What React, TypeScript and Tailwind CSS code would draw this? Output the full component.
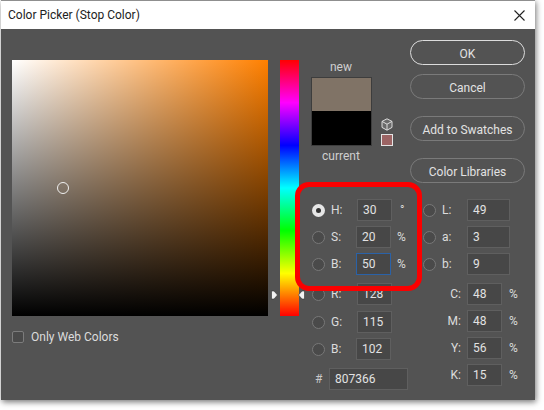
import React from "react";

const font = { fontFamily: 'Roboto, "Open Sans", sans-serif' };

function Btn({ label, primary, cls }: { label: string; primary?: boolean; cls: string }) {
  return (
    <div
      className={`w-[115px] h-[25px] pt-[2px] rounded-full border-[1.5px] flex items-center justify-center text-[12px] text-[#e2e2e2] ${
        primary ? "border-[#dcdcdc]" : "border-[#7a7a7a]"
      } ${cls}`}
    >
      {label}
    </div>
  );
}

function Radio({ on }: { on?: boolean }) {
  return on ? (
    <div className="w-[13px] h-[13px] rounded-full bg-[#e6e6e6] flex items-center justify-center shrink-0">
      <div className="w-[5px] h-[5px] rounded-full bg-[#333333]" />
    </div>
  ) : (
    <div className="w-[13px] h-[13px] rounded-full bg-[#4a4a4a] border border-[#787878] shrink-0" />
  );
}

function Field({ value, w, focus, ml }: { value: string; w: string; focus?: boolean; ml?: string }) {
  return (
    <div
      className={`h-[22px] ${w} ${ml ?? ""} border flex items-center pl-[5px] text-[12px] text-[#e2e2e2] bg-[#474747] shrink-0 ${
        focus ? "border-[#2a62a8]" : "border-[#5f5f5f]"
      }`}
    >
      {value}
    </div>
  );
}

function LeftRow({ label, value, unit, on, focus, cls, inputCls, unitCls }: { label: string; value: string; unit?: string; on?: boolean; focus?: boolean; cls: string; inputCls: string; unitCls?: string }) {
  return (
    <div className={`flex items-center h-[22px] text-[12px] text-[#dcdcdc] ${cls}`}>
      <Radio on={on} />
      <span className="ml-[6px] w-[26px]">{label}</span>
      <Field value={value} w="w-[35px]" focus={focus} ml={inputCls} />
      {unit && <span className={unitCls}>{unit}</span>}
    </div>
  );
}

function LabRow({ label, value, cls }: { label: string; value: string; cls: string }) {
  return (
    <div className={`flex items-center h-[22px] text-[12px] text-[#dcdcdc] ${cls}`}>
      <Radio />
      <span className="ml-[6px] w-[25px]">{label}</span>
      <Field value={value} w="w-[43px]" />
    </div>
  );
}

function CmykRow({ label, value, cls }: { label: string; value: string; cls: string }) {
  return (
    <div className={`flex items-center h-[22px] text-[12px] text-[#dcdcdc] ${cls}`}>
      <span className="w-[38px] text-right">{label}</span>
      <Field value={value} w="w-[35px]" ml="ml-[6px]" />
      <span className="ml-[7px]">%</span>
    </div>
  );
}

export default function App() {
  return (
    <div className="w-[544px] h-[410px] bg-white pl-px overflow-hidden" style={font}>
      <div className="w-[534px] h-[400px] border-t border-[#8f8f8f] flex flex-col shadow-[1px_2px_6px_rgba(0,0,0,0.55)]">
        <div className="h-[28px] bg-white flex items-center justify-between pl-[7px] pr-[10px] shrink-0">
          <span className="text-[12px] text-[#222222]">Color Picker (Stop Color)</span>
          <svg width="11" height="11" viewBox="0 0 11 11" stroke="#222222" strokeWidth="1.1" fill="none">
            <path d="M0.5 0.5 L10.5 10.5 M10.5 0.5 L0.5 10.5" />
          </svg>
        </div>
        <div className="relative flex-1 bg-[#535353] flex">
          <div className="w-[267px] pl-[11px] pt-[31px] shrink-0">
            <div className="w-[256px] h-[256px] bg-[linear-gradient(to_bottom,transparent,#000),linear-gradient(to_right,#fff,#ff8000)] relative">
              <div className="absolute left-[45px] top-[122px] w-[12px] h-[12px] rounded-full border border-[#f0f0f0]" />
            </div>
            <div className="flex items-center mt-[12px] text-[12px] text-[#dcdcdc]">
              <div className="w-[12px] h-[12px] rounded-[2px] bg-[#4a4a4a] border border-[#7c7c7c]" />
              <span className="ml-[7px]">Only Web Colors</span>
            </div>
          </div>
          <div className="ml-[12px] mt-[31px] w-[19px] h-[256px] shrink-0 bg-[linear-gradient(to_bottom,#ff0000,#ff00ff_16.66%,#0000ff_33.33%,#00ffff_50%,#00ff00_66.66%,#ffff00_83.33%,#ff0000)]" />
          <div className="ml-[5px] w-[230px] shrink-0 flex flex-col">
            <div className="h-[170px] flex shrink-0">
              <div className="w-[106px] pl-[6px] shrink-0 flex flex-col">
                <div className="w-[62px] text-center text-[12px] text-[#cfcfcf] mt-[29px] h-[18px] leading-[18px]">new</div>
                <div className="flex items-end mt-px">
                  <div className="w-[61px] ml-px h-[69px] border border-[#3d3d3d] flex flex-col">
                    <div className="h-[33px] bg-[#807366]" />
                    <div className="flex-1 bg-black" />
                  </div>
                  <div className="ml-[9px] flex flex-col items-center">
                    <svg width="12" height="13" viewBox="0 0 12 13" fill="#6a6a6a" stroke="#dddddd" strokeWidth="1">
                      <path d="M6 0.8 L11 3.4 V9.4 L6 12.2 L1 9.4 V3.4 Z" />
                      <path d="M1 3.4 L6 6.2 L11 3.4 M6 6.2 V12.2" fill="none" />
                    </svg>
                    <div className="w-[12px] h-[12px] mt-[3px] bg-[#9c6464] border border-[#e4e4e4]" />
                  </div>
                </div>
                <div className="w-[62px] text-center text-[12px] text-[#cfcfcf] mt-px">current</div>
              </div>
              <div className="flex flex-col">
                <Btn label="OK" primary cls="mt-[11px]" />
                <Btn label="Cancel" cls="mt-[9px]" />
                <Btn label="Add to Swatches" cls="mt-[17px]" />
                <Btn label="Color Libraries" cls="mt-[17px]" />
              </div>
            </div>
            <div className="flex">
              <div className="w-[119px] pl-[8px] shrink-0 flex flex-col">
                <LeftRow label="H:" value="30" unit="°" on cls="" inputCls="" unitCls="ml-[8px]" />
                <LeftRow label="S:" value="20" unit="%" cls="mt-[5px]" inputCls="-ml-px" unitCls="ml-[6px]" />
                <LeftRow label="B:" value="50" unit="%" focus cls="mt-[5px]" inputCls="-ml-px" unitCls="ml-[6px]" />
                <LeftRow label="R:" value="128" cls="mt-[8px]" inputCls="" />
                <LeftRow label="G:" value="115" cls="mt-[6px]" inputCls="" />
                <LeftRow label="B:" value="102" cls="mt-[5px]" inputCls="-ml-px" />
                <div className="flex items-center h-[22px] mt-[8px] text-[12px] text-[#c8c8c8]">
                  <span className="ml-[3px] w-[14px]">#</span>
                  <Field value="807366" w="w-[79px]" />
                </div>
              </div>
              <div className="flex flex-col">
                <LabRow label="L:" value="49" cls="" />
                <LabRow label="a:" value="3" cls="mt-[5px]" />
                <LabRow label="b:" value="9" cls="mt-[5px]" />
                <CmykRow label="C:" value="48" cls="mt-[8px]" />
                <CmykRow label="M:" value="48" cls="mt-[5px]" />
                <CmykRow label="Y:" value="56" cls="mt-[5px]" />
                <CmykRow label="K:" value="15" cls="mt-[5px]" />
              </div>
            </div>
          </div>
          <div className="absolute left-[294px] top-[153px] w-[127px] h-[109px] rounded-[14px] border-[5px] border-[#fb0000]" />
          <svg className="absolute left-[269px] top-[261px]" width="36" height="10" viewBox="0 0 36 10">
            <path d="M1.5 1 H4 L7.5 5 L4 9 H1.5 Z" fill="#f2f2f2" stroke="#333333" strokeWidth="0.6" />
            <path d="M34.5 1 H32 L28.5 5 L32 9 H34.5 Z" fill="#f2f2f2" stroke="#333333" strokeWidth="0.6" />
          </svg>
        </div>
      </div>
    </div>
  );
}
